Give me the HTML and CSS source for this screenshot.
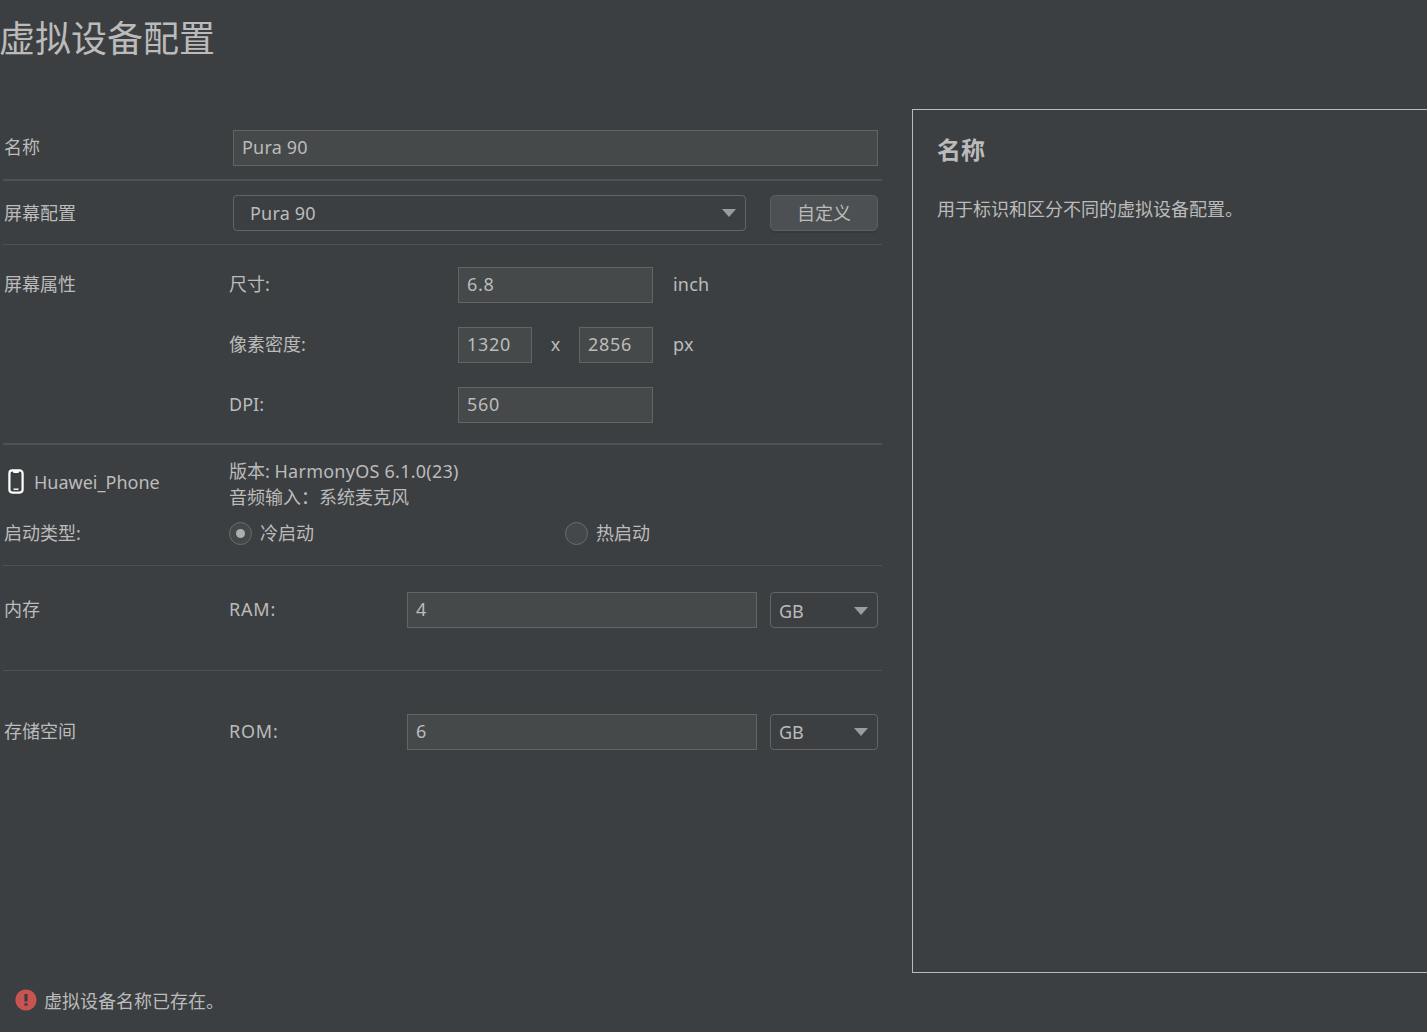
FILE: index.html
```html
<!DOCTYPE html>
<html lang="zh-CN">
<head>
    <meta charset="UTF-8">
    <meta name="viewport" content="width=device-width, initial-scale=1.0">
    <title>虚拟设备配置</title>
    <link rel="stylesheet" href="styles.css">
</head>
<body>
    <h1 class="title">虚拟设备配置</h1>
    <div class="content">
        <form class="config">
            <div class="section name">
                <label class="caption">名称</label>
                <input type="text" class="field" value="Pura 90">
            </div>
            <div class="section screen">
                <label class="caption">屏幕配置</label>
                <div class="select">
                    <span>Pura 90</span>
                    <svg class="arrow" width="14" height="8" viewBox="0 0 14 8"><path d="M0 0h14L7 8z"/></svg>
                </div>
                <button type="button" class="button">自定义</button>
            </div>
            <div class="section props">
                <label class="caption">屏幕属性</label>
                <div class="lines">
                    <div class="line">
                        <label class="sub">尺寸:</label>
                        <input type="text" class="field number size" value="6.8">
                        <span class="unit">inch</span>
                    </div>
                    <div class="line">
                        <label class="sub">像素密度:</label>
                        <input type="text" class="field number px" value="1320">
                        <span class="times">x</span>
                        <input type="text" class="field number px" value="2856">
                        <span class="unit">px</span>
                    </div>
                    <div class="line">
                        <label class="sub">DPI:</label>
                        <input type="text" class="field number size" value="560">
                    </div>
                </div>
            </div>
            <div class="section device">
                <div class="info">
                    <div class="caption phone">
                        <svg width="16" height="25" viewBox="0 0 16 25">
                            <rect x="1.4" y="1.4" width="13.2" height="22.2" rx="3" fill="none" stroke="#fff" stroke-width="2.2"/>
                            <path d="M4.5 1.5h7l-1 2.4h-5z" fill="#fff"/>
                            <path d="M5.5 20.2h5" stroke="#fff" stroke-width="1.4"/>
                        </svg>
                        <span>Huawei_Phone</span>
                    </div>
                    <div class="version">版本: <span class="os">HarmonyOS 6.1.0(23)</span><br>音频输入：系统麦克风</div>
                </div>
                <div class="boot">
                    <label class="caption">启动类型:</label>
                    <label class="option"><span class="radio checked"></span>冷启动</label>
                    <label class="option"><span class="radio"></span>热启动</label>
                </div>
            </div>
            <div class="section memory">
                <label class="caption">内存</label>
                <label class="sub">RAM:</label>
                <input type="text" class="field" value="4">
                <div class="select gb">
                    <span>GB</span>
                    <svg class="arrow" width="14" height="8" viewBox="0 0 14 8"><path d="M0 0h14L7 8z"/></svg>
                </div>
            </div>
            <div class="section memory storage">
                <label class="caption">存储空间</label>
                <label class="sub">ROM:</label>
                <input type="text" class="field" value="6">
                <div class="select gb">
                    <span>GB</span>
                    <svg class="arrow" width="14" height="8" viewBox="0 0 14 8"><path d="M0 0h14L7 8z"/></svg>
                </div>
            </div>
        </form>
        <div class="help">
            <h2>名称</h2>
            <p>用于标识和区分不同的虚拟设备配置。</p>
        </div>
    </div>
    <div class="error">
        <svg width="22" height="22" viewBox="0 0 22 22">
            <circle cx="11" cy="11" r="10.6" fill="#c75450"/>
            <path d="M9.4 5h3.2v7.4H9.4zM9.4 14.2h3.2v2.6H9.4z" fill="#3c3f41"/>
        </svg>
        <span>虚拟设备名称已存在。</span>
    </div>
</body>
</html>
```
FILE: styles.css
```css
* {box-sizing: border-box;}
body {
    margin: 0;
    height: 1032px;
    overflow: hidden;
    background-color: #3c3f41;
    color: #bbbbbb;
    font-family: "Noto Sans", "Noto Sans CJK SC", sans-serif;
    font-size: 18px;
    line-height: 26px;
}
h1, h2, p {margin: 0; font-weight: normal;}
.title {height: 109px; padding-top: 14px; font-size: 36px; line-height: 50px; margin-left: -1px;}
.content {display: flex; height: 864px;}

/* left side, the settings */
.config {width: 879px; margin-left: 3px; flex: none;}
.section {display: flex; align-items: flex-start; border-bottom: 1px solid #515151; padding-right: 4px;}
.caption {width: 226px; flex: none; padding-left: 1px; line-height: 36px; white-space: nowrap;}
.sub {width: 229px; flex: none; line-height: 34px;}
.field {
    height: 36px;
    padding: 0 8px 2px;
    border: 1px solid #646464;
    background-color: #45494a;
    color: #bbbbbb;
    font: inherit;
    letter-spacing: 0.2px;
    outline: none;
    min-width: 0;
}
.number {padding-bottom: 3px; letter-spacing: 0.7px;}
.select {
    display: flex;
    align-items: center;
    justify-content: space-between;
    height: 36px;
    padding: 0 9px 0 16px;
    border: 1px solid #646464;
    border-radius: 4px;
    letter-spacing: 0.2px;
}
.arrow {fill: #9a9da0;}
.button {
    width: 108px;
    height: 36px;
    padding: 0 0 1px;
    border: 1px solid #5e6060;
    border-radius: 5px;
    background-color: #4c5052;
    box-shadow: 0 2px 1px #36393a;
    color: #bbbbbb;
    font: inherit;
}

.name {height: 72px; padding-top: 21px; border-bottom-width: 2px;}
.name .caption {line-height: 35px;}
.name .field {flex: 1; margin-left: 4px;}
.screen {height: 64px; padding-top: 14px;}
.screen .select {flex: 1; margin: 0 24px 0 4px; padding-bottom: 1px;}
.props {height: 200px; padding-top: 22px; border-bottom-width: 2px;}
.props .caption {line-height: 35px;}
.lines {display: flex; flex-direction: column; gap: 24px;}
.line {display: flex; line-height: 34px;}
.size {width: 195px;}
.px {width: 74px;}
.times {width: 47px; text-align: center;}
.unit {margin-left: 20px; letter-spacing: 0.2px;}

.device {height: 121px; flex-direction: column; padding-top: 13px;}
.info {display: flex; height: 52px;}
.phone {display: flex; align-items: center; gap: 10px; padding-left: 5px; height: 47px;}
.version {line-height: 26px;}
.os {letter-spacing: 0.25px;}
.boot {display: flex; align-items: center; height: 46px;}
.option {display: flex; align-items: center; width: 336px; gap: 8px;}
.radio {
    display: flex;
    align-items: center;
    justify-content: center;
    width: 23px;
    height: 23px;
    border: 1px solid #6b6b6b;
    border-radius: 50%;
    background-color: #43494a;
}
.checked::after {content: ""; width: 9px; height: 9px; border-radius: 50%; background-color: #adadad;}

.memory {height: 105px; padding-top: 26px;}
.memory .caption {line-height: 34px;}
.memory .sub {width: 178px; letter-spacing: 0.8px;}
.memory .field {width: 350px;}
.gb {flex: 1; margin-left: 13px; padding-top: 1px; padding-left: 8px; padding-right: 9px; letter-spacing: 0;}
.storage {border-bottom: none; padding-top: 43px;}
.storage .field {padding-bottom: 3px;}
.storage .gb {padding-top: 0;}

/* right side, help for the focused setting */
.help {flex: 1; margin-left: 30px; padding: 23px 24px; border: 1px solid #bbbbbb; border-right: none;}
.help h2 {font-size: 24px; line-height: 34px; font-weight: bold;}
.help p {margin-top: 29px;}

.error {display: flex; align-items: flex-start; gap: 7px; padding: 16px 0 0 15px;}
.error span {margin-top: -1px;}
```
